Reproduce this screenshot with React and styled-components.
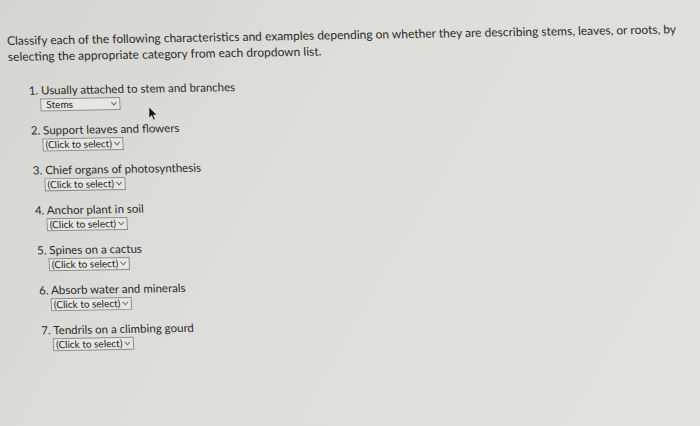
import React from 'react'
import styled, { createGlobalStyle } from 'styled-components'

const GlobalStyle = createGlobalStyle`
html, body {
    margin: 0;
    padding: 0;
}
body {
    font-family: Lato, "Open Sans", Arial, sans-serif;
    color: #2b2b2b;
}
`

const Page = styled.div`
position: relative;
width: 700px;
height: 426px;
overflow: hidden;
background: linear-gradient(120deg, #d5d5d2 0%, #dcdcd9 35%, #e2e2df 100%);
`

const Sheet = styled.div`
padding: 33px 0 0 7px;
transform-origin: 8px 40px;
transform: rotate(-1deg) skewX(2deg);
`

const Prompt = styled.p`
margin: 0;
width: 690px;
font-size: 12px;
line-height: 15.5px;
`

const List = styled.ol`
list-style: none;
margin: 20px 0 0 0;
padding: 0 0 0 19px;
display: grid;
row-gap: 12px;
`

const Item = styled.li`
display: flex;
flex-direction: column;
align-items: flex-start;
`

const Label = styled.span`
font-size: 11.5px;
line-height: 14px;
`

const Dropdown = styled.div`
margin: 1px 0 0 11px;
box-sizing: border-box;
height: 13px;
width: ${p => (p.$width ? `${p.$width}px` : 'auto')};
display: flex;
align-items: center;
justify-content: space-between;
gap: 2px;
padding: 0 2px 0 ${p => (p.$width ? '5px' : '2px')};
border: 1px solid #8d8d8b;
background: #e6e6e3;
font-size: 10px;
line-height: 11px;
color: #222;
`

const Chevron = () => (
    <svg width="7" height="5" viewBox="0 0 7 5">
        <path d="M0.8 0.8 L3.5 3.8 L6.2 0.8" fill="none" stroke="#6a6a6a" strokeWidth="1" />
    </svg>
)

const Cursor = styled.svg`
position: absolute;
left: 148px;
top: 106px;
`

const items = [
    { label: '1. Usually attached to stem and branches', value: 'Stems', width: 80 },
    { label: '2. Support leaves and flowers', value: '(Click to select)' },
    { label: '3. Chief organs of photosynthesis', value: '(Click to select)' },
    { label: '4. Anchor plant in soil', value: '(Click to select)' },
    { label: '5. Spines on a cactus', value: '(Click to select)' },
    { label: '6. Absorb water and minerals', value: '(Click to select)' },
    { label: '7. Tendrils on a climbing gourd', value: '(Click to select)' },
]

const App = () => {
    return (
        <Page>
            <GlobalStyle />
            <Sheet>
                <Prompt>
                    Classify each of the following characteristics and examples depending on whether they are describing stems, leaves, or roots, by selecting the appropriate category from each dropdown list.
                </Prompt>
                <List>
                    {items.map(item => (
                        <Item key={item.label}>
                            <Label>{item.label}</Label>
                            <Dropdown $width={item.width}>
                                <span>{item.value}</span>
                                <Chevron />
                            </Dropdown>
                        </Item>
                    ))}
                </List>
            </Sheet>
            <Cursor width="10" height="15" viewBox="0 0 10 15">
                <path d="M1 1 L1 12 L3.6 9.6 L5.6 14 L7.2 13.3 L5.3 9 L8.8 9 Z" fill="#151515" stroke="#e0e0e0" strokeWidth="0.6" />
            </Cursor>
        </Page>
    )
}

export default App
